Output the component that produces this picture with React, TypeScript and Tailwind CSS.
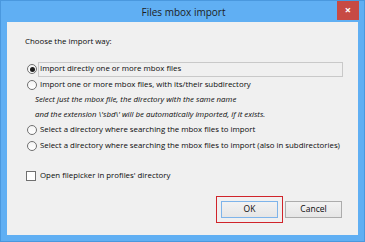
import React from "react";

const font = { fontFamily: '"Open Sans", "Noto Sans", Arial, sans-serif' };

function Radio({ checked }: { checked?: boolean }) {
  return (
    <div className="w-[10px] h-[10px] rounded-full border border-[#707070] bg-gradient-to-b from-[#f4f4f4] to-[#ffffff] flex items-center justify-center shrink-0">
      {checked && <div className="w-[5px] h-[5px] rounded-full bg-[#1e1e1e]" />}
    </div>
  );
}

export default function App() {
  return (
    <div
      className="w-[365px] h-[242px] bg-[#60aff3] border border-[#4a98de] flex flex-col text-[#0a0a0a] overflow-hidden"
      style={font}
    >
      <div className="h-[21px] flex items-start relative shrink-0">
        <div className="flex-1 text-center text-[10px] leading-[22px] text-[#1d1d1d] pl-[2px]">Files mbox import</div>
        <div className="absolute right-[5px] top-[-1px] w-[22px] h-[20px] bg-[#c74a44] flex items-center justify-center text-white text-[11px] font-bold">
          ×
        </div>
      </div>
      <div className="flex-1 mx-[6px] mb-[6px] bg-[#f0f0f0] flex flex-col pl-[18px] text-[7.85px] whitespace-nowrap">
        <div className="h-[16px] mt-[12px] flex items-center">Choose the import way:</div>
        <div className="h-[16px] mt-[11px] flex items-center pl-[2px]">
          <Radio checked />
          <div className="ml-[1px] h-[15px] w-[305px] border border-[#c9c9c9] flex items-center pl-[1px]">
            Import directly one or more mbox files
          </div>
        </div>
        <div className="h-[15px] flex items-center pl-[2px]">
          <Radio />
          <span className="ml-[3px]">Import one or more mbox files, with its/their subdirectory</span>
        </div>
        <div className="h-[15px] flex items-center pl-[10px] italic">
          Select just the mbox file, the directory with the same name
        </div>
        <div className="h-[15px] flex items-center pl-[10px] italic">
          and the extension \'sbd\' will be automatically imported, if it exists.
        </div>
        <div className="h-[16px] flex items-center pl-[2px]">
          <Radio />
          <span className="ml-[3px]">Select a directory where searching the mbox files to import</span>
        </div>
        <div className="h-[16px] flex items-center pl-[2px]">
          <Radio />
          <span className="ml-[3px]">Select a directory where searching the mbox files to import (also in subdirectories)</span>
        </div>
        <div className="h-[16px] mt-[14px] flex items-center pl-[1px]">
          <div className="w-[10px] h-[10px] border border-[#707070] bg-white shrink-0" />
          <span className="ml-[4px]">Open filepicker in profiles' directory</span>
        </div>
        <div className="flex justify-end items-center mt-[12px] pr-[16px]">
          <div className="border border-[#d0242a] p-[4px]">
            <div className="w-[57px] h-[17px] border border-[#7eb4ea] bg-gradient-to-b from-[#f2f2f2] to-[#e6e6e6] flex items-center justify-center text-[8.5px]">
              OK
            </div>
          </div>
          <div className="ml-[2px] w-[57px] h-[17px] border border-[#acacac] bg-gradient-to-b from-[#f2f2f2] to-[#e6e6e6] flex items-center justify-center text-[8.5px]">
            Cancel
          </div>
        </div>
      </div>
    </div>
  );
}
